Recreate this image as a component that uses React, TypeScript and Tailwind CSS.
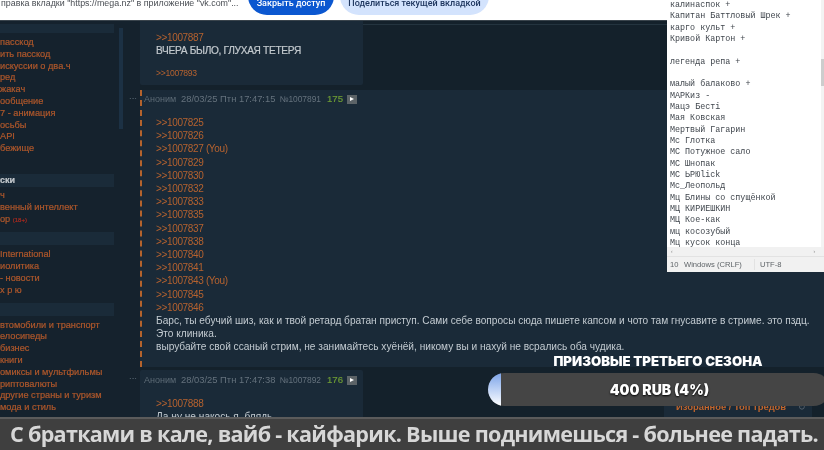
const NOTE: string[] = ["калинаспок +","Капитан Баттловый Шрек +","карго культ +","Кривой Картон +","","легенда репа +","","малый балаково +","МАРКиз -","Мацэ Бестi","Мая Ковская","Мертвый Гагарин","Мс Глотка","МС Потужное сало","МС Шнопак","МС ЬРЮlick","Мс_Леопольд","Мц Блины со спущёнкой","МЦ КИРИЕШКИН","МЦ Кое-как","мц косозубый","Мц кусок конца"];
const G1 = ["пасскод","ить пасскод","искуссии о два.ч","ред","жакач","ообщение","7 - анимация","осьбы","API","бежище"];
const G2 = ["ч","венный интеллект"];
const G3 = ["International","иолитика","- новости","х р ю"];
const G4 = ["втомобили и транспорт","елосипеды","бизнес","книги","омиксы и мультфильмы","риптовалюты","другие страны и туризм","мода и стиль"];
const REFS = ["1007825","1007826","1007827 (You)","1007829","1007830","1007832","1007833","1007835","1007837","1007838","1007840","1007841","1007843 (You)","1007845","1007846"];

function Links({ items }: { items: string[] }) {
  return <ul className="flex flex-col">{items.map((t) => <li key={t} className="h-[11.8px] leading-[11.8px] whitespace-nowrap">{t}</li>)}</ul>;
}
function Band({ children }: { children?: React.ReactNode }) {
  return <div className="h-[13px] w-[114px] bg-[#1a2b39] text-[#c3c8cc] text-[9px] leading-[13px] font-bold">{children}</div>;
}
function Meta({ name, date, no, idx }: { name: string; date: string; no: string; idx: string }) {
  return (
    <div className="flex items-center gap-[4px] text-[9.4px] leading-[12px] text-[#65727d] whitespace-nowrap">
      <span className="w-[33px] text-[9px] text-[#5d6b76]">{name}</span><span>{date}</span><span className="text-[8.4px]">{no}</span>
      <span className="text-[#6d9a35] text-[9.6px] ml-[2px] [-webkit-text-stroke:0.2px]">{idx}</span>
      <span className="flex h-[9px] w-[10px] items-center justify-center bg-[#5c6367]"><span className="border-y-[2.5px] border-l-[4px] border-y-transparent border-l-white" /></span>
    </div>
  );
}

export default function App() {
  return (
    <div className="relative h-[450px] w-[824px] overflow-hidden bg-[#17242f] blur-[0.35px]" style={{ fontFamily: '"Liberation Sans", sans-serif' }}>
      <header className="flex h-[21px] items-start border-b border-[#3a444c] bg-white text-[10px] text-[#444a50]">
        <p className="w-[248px] -mt-[3px] pl-[1px] whitespace-nowrap text-[8.9px] leading-[12px] text-[#4b4f55]">правка вкладки "https://mega.nz" в приложение "vk.com"...</p>
        <button className="-mt-[4px] h-[19px] w-[86px] rounded-b-full bg-[#0b57d0] pb-[5px] text-center text-[9px] leading-[14px] font-medium text-white" style={{ fontFamily: 'Roboto, sans-serif' }}>Закрыть доступ</button>
        <button className="-mt-[4px] ml-[6px] h-[19px] w-[149px] rounded-b-full bg-[#d3e3fd] pb-[5px] text-center text-[9px] leading-[14px] font-medium text-[#1f3760]" style={{ fontFamily: 'Roboto, sans-serif' }}>Поделиться текущей вкладкой</button>
      </header>
      <div className="flex h-[429px]">
        <aside className="relative flex h-full w-[140px] shrink-0 bg-[#15222d] pt-[3px] text-[9.2px] text-[#b0582b] [-webkit-text-stroke:0.2px]">
          <div className="w-[118px] shrink-0">
            <div className="h-[9px] w-[114px] bg-[#1a2b39]" />
            <div className="mt-[4px]"><Links items={G1} /></div>
            <div className="mt-[19px]"><Band>ски</Band></div>
            <div className="mt-[3px]"><Links items={G2} />
              <p className="h-[11.8px] leading-[11.8px]">ор <span className="text-[6px] text-[#a92a1f]">(18+)</span></p></div>
            <div className="mt-[7px]"><Band /></div>
            <div className="mt-[4px]"><Links items={G3} /></div>
            <div className="mt-[6px]"><Band /></div>
            <div className="mt-[4px]"><Links items={G4} /></div>
          </div>
          <div className="mt-[4px] ml-[1px] h-[101px] w-[4px] bg-[#1c3144]" />
          <span className="absolute left-[129px] top-[72px] text-[8px] text-[#52606b]">···</span>
          <span className="absolute left-[129px] top-[352px] text-[8px] text-[#52606b]">···</span>
        </aside>
        <main className="flex min-w-0 flex-1 flex-col text-[10.14px] leading-[13.2px] text-[#c3cbd1]">
          <div className="h-[69px] shrink-0 bg-[#14212b]">
            <div className="h-[4px] border-b border-[#24343f]" />
            <article className="-mt-[4px] h-[64px] w-[223px] rounded-b-[2px] bg-[#1a2a38] pl-[16px] pt-[10px]">
              <p className="text-[10px] tracking-[-0.35px] text-[#b5622f]">&gt;&gt;1007887</p>
              <p className="tracking-[-0.3px] text-[#c3c9ce] [-webkit-text-stroke:0.2px]">ВЧЕРА БЫЛО, ГЛУХАЯ ТЕТЕРЯ</p>
              <p className="mt-[10px] text-[8.6px] tracking-[-0.3px] text-[#b5622f]">&gt;&gt;1007893</p>
            </article>
          </div>
          <article className="h-[277px] shrink-0 border-l-2 border-dashed border-[#b4632d] bg-[#1a2a38] pl-[14px] pt-[3px]">
            <div className="-ml-[12px]"><Meta name="Аноним" date="28/03/25 Птн 17:47:15" no="№1007891" idx="175" /></div>
            <div className="mt-[11px] text-[10px] tracking-[-0.35px] text-[#b5622f]">
              {REFS.map((r) => <p key={r}>&gt;&gt;{r}</p>)}
            </div>
            <p className="whitespace-pre">{"Барс, ты ебучий шиз, как и твой ретард братан приступ. Сами себе вопросы сюда пишете капсом и чото там гнусавите в стриме. это пздц.\nЭто клиника.\nвырубайте свой ссаный стрим, не занимайтесь хуёнёй, никому вы и нахуй не всрались оба чудика."}</p>
          </article>
          <div className="min-h-0 flex-1 bg-[#14212b] pt-[3px]">
            <article className="h-full w-[223px] rounded-t-[2px] bg-[#1a2a38] pl-[4px] pt-[4px]">
              <Meta name="Аноним" date="28/03/25 Птн 17:47:38" no="№1007892" idx="176" />
              <div className="ml-[12px] mt-[11px]">
                <p className="text-[10px] tracking-[-0.35px] text-[#b5622f]">&gt;&gt;1007888</p>
                <p>Да ну не накось я, блядь</p>
              </div>
            </article>
          </div>
        </main>
      </div>

      <section className="absolute right-0 top-0 flex h-[272px] w-[157px] flex-col bg-[#f1f1f1]" style={{ fontFamily: '"Liberation Mono", monospace' }}>
        <div className="flex h-[247px] overflow-hidden">
          <pre className="w-[154px] overflow-hidden bg-white pl-[3px] text-[8.4px] leading-[11.33px] text-[#3f454c]" style={{ fontFamily: '"Liberation Mono", monospace' }}>{NOTE.join("\n")}</pre>
          <div className="relative w-[3px] bg-[#f3f3f3]"><div className="absolute top-[59px] h-[27px] w-[3px] bg-[#cdcdcd]" /></div>
        </div>
        <div className="flex h-[9px] items-center justify-between px-[3px] text-[6px] text-[#9a9a9a]"><span>‹</span><span className="mr-[5px]">›</span></div>
        <div className="flex h-[16px] items-center border-t border-[#e2e2e2] text-[7.6px] text-[#5f6468]" style={{ fontFamily: '"Liberation Sans", sans-serif' }}>
          <span className="w-[17px] pl-[3px]">10</span><span className="w-[71px] border-r border-[#e2e2e2]">Windows (CRLF)</span><span className="pl-[5px]">UTF-8</span>
        </div>
      </section>

      <div className="absolute left-[664px] top-[398px] flex h-[19px] w-[148px] items-center gap-[12px] whitespace-nowrap bg-[#1a2a38] pl-[12px] text-[9.4px] font-bold text-[#c0652c]">
        Избранное / Топ тредов <span className="text-[#5a6670] font-normal">↻</span>
      </div>

      <section className="absolute left-[488px] top-[354px] w-[342px]" style={{ fontFamily: 'Inter, sans-serif' }}>
        <h2 className="mr-[2px] text-center text-[13.2px] leading-[15px] font-black text-white">ПРИЗОВЫЕ ТРЕТЬЕГО СЕЗОНА</h2>
        <div className="mt-[4px] flex h-[33px] overflow-hidden rounded-full bg-[#454545]">
          <div className="h-full w-[13px] bg-gradient-to-b from-[#7da4e8] to-white" />
          <p className="flex-1 pr-[12px] text-center text-[14px] leading-[33px] font-black text-white [text-shadow:0_1px_2px_#000]">400 RUB (4%)</p>
        </div>
      </section>

      <footer className="absolute inset-x-0 bottom-0 h-[33px] border-t-2 border-[#5b5b5b] bg-[#3f3f3f] pl-[10px] whitespace-nowrap text-[21.6px] leading-[30px] font-bold tracking-[-0.72px] text-[#d7d7d7]" style={{ fontFamily: '"Open Sans", sans-serif' }}>
        С братками в кале, вайб - кайфарик. Выше поднимешься - больнее падать.
      </footer>
    </div>
  );
}
